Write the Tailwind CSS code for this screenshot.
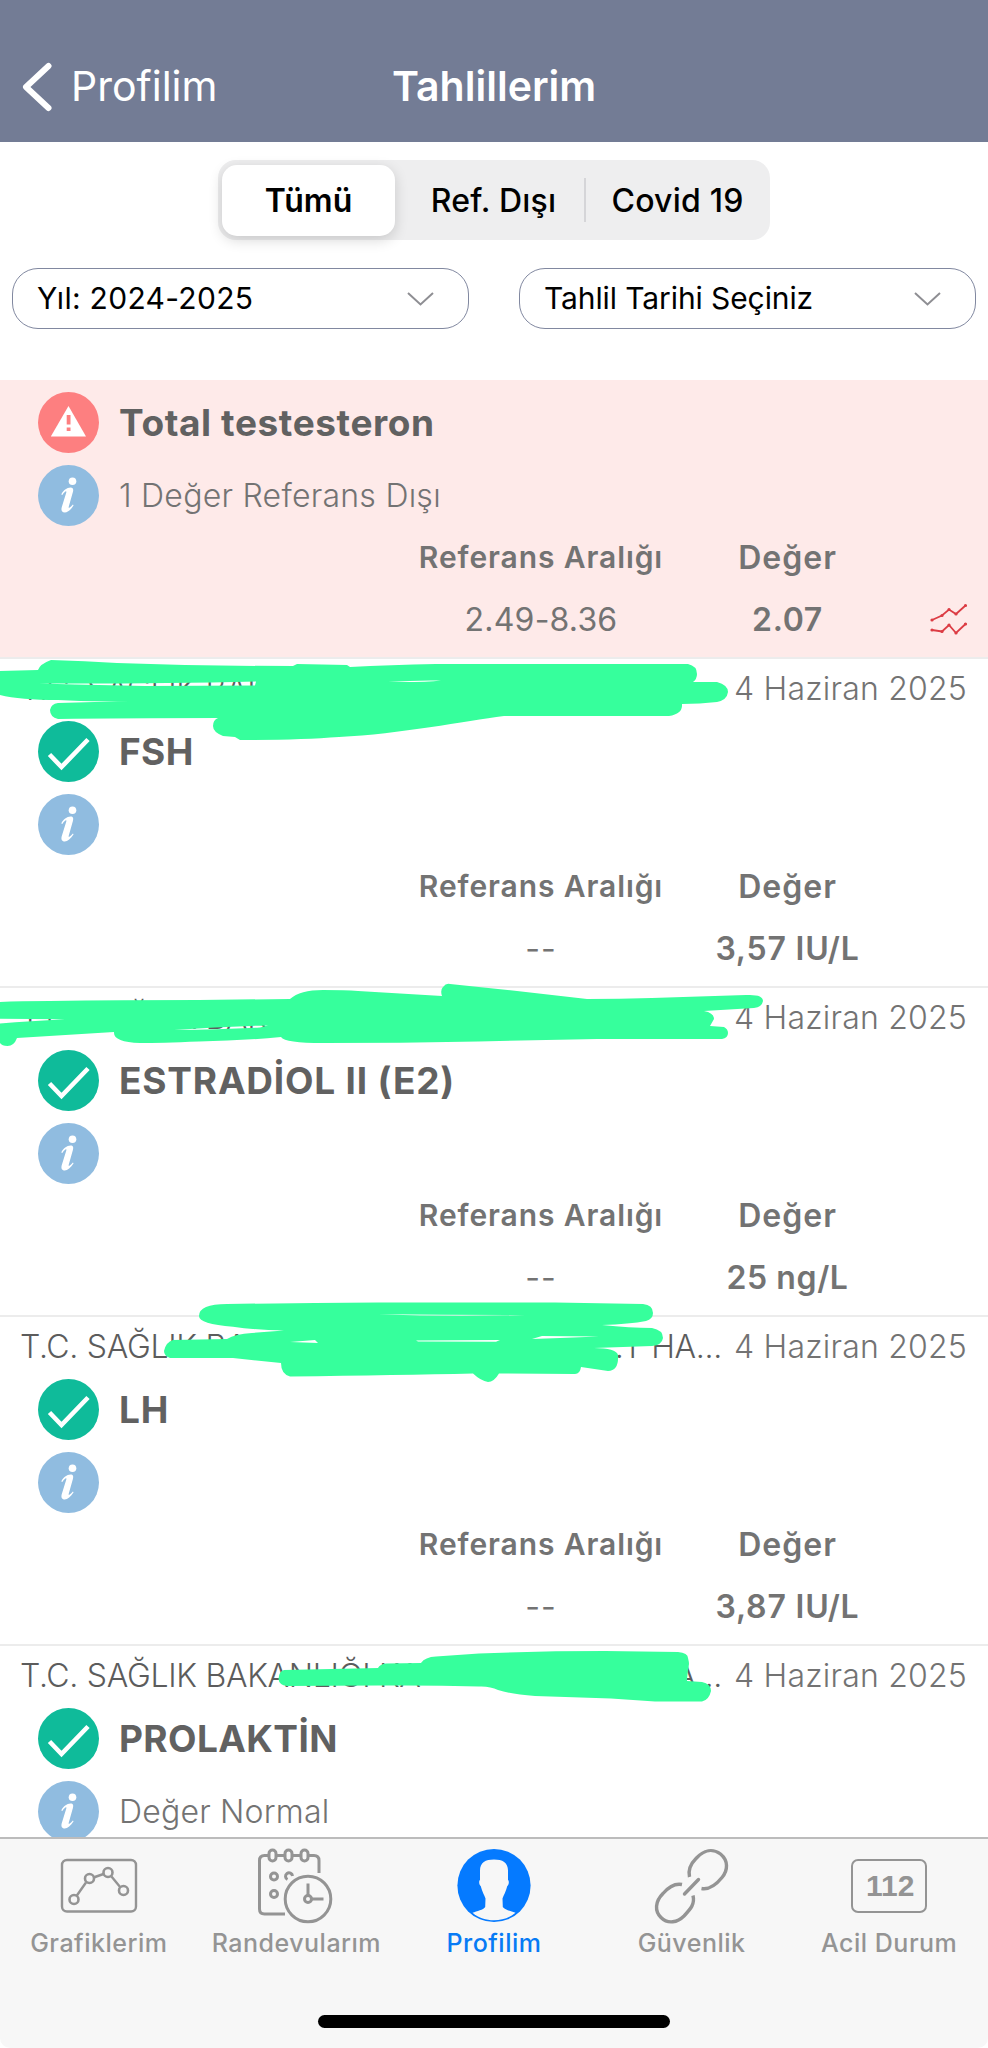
<!DOCTYPE html>
<html lang="tr">
<head>
  <meta charset="UTF-8">
  <title>Tahlillerim</title>
  <script src="https://cdn.jsdelivr.net/npm/@tailwindcss/browser@4"></script>
</head>
<body class="bg-white font-[Inter,'Liberation_Sans',sans-serif]">

  <!-- Shared icons -->
  <svg class="hidden">
    <symbol id="icon-check" viewBox="0 0 61 61">
      <circle cx="30.5" cy="30.5" r="30.5" fill="#0fbb9a"/>
      <path d="M11.5 33.5 L23.5 46 L50 18.5" fill="none" stroke="#fff" stroke-width="4.6"/>
    </symbol>
    <symbol id="icon-info" viewBox="0 0 61 61">
      <circle cx="30.5" cy="30.5" r="30.5" fill="#90bce0"/>
      <circle cx="34.5" cy="16.3" r="3.8" fill="#fff"/>
      <path d="M23.3 29.5 C25 25.5 29 22.5 32.5 22.5 C35.3 22.5 35.6 24.5 34.9 27 L30.8 41.5 C30.2 43.6 31.4 43.6 34.9 39.6 L35.6 40.3 C32.8 45 29.5 47.5 26.8 47.5 C23.6 47.5 22.9 45 23.8 42 L28.3 27.5 C28.8 25.5 27.2 25.6 24.3 30.1 Z" fill="#fff"/>
    </symbol>
  </svg>

  <div class="relative flex h-[2048px] w-[988px] flex-col overflow-hidden">

    <header class="grid h-[142px] shrink-0 grid-cols-[392px_204px_1fr] items-center bg-[#737c95] pt-[31px] text-[41px] leading-none text-white">
      <div class="flex items-center pl-[21px]">
        <svg class="h-[50px] w-[32px]" viewBox="0 0 32 50" fill="none" stroke="#fff" stroke-width="6" stroke-linecap="round" stroke-linejoin="round">
          <path d="M27.5 4 L5 25 L27.5 46"/>
        </svg>
        <span class="ml-[18px]">Profilim</span>
      </div>
      <h1 class="text-center font-semibold whitespace-nowrap">Tahlillerim</h1>
    </header>

    <section class="h-[238px] shrink-0 pt-[18px]">
      <div class="mx-auto flex h-[80px] w-[552px] items-center rounded-[18px] bg-[#eeeeef] p-[4px] text-[32px] font-medium text-black">
        <div class="flex h-[71px] w-[173px] items-center justify-center rounded-[15px] bg-white pt-px font-semibold shadow-[0_4px_14px_rgba(0,0,0,0.16)]">Tümü</div>
        <div class="flex h-[44px] w-[191px] items-center justify-center border-r-2 border-[#d5d5d8] pt-px pl-[8px] tracking-[0.2px]">Ref. Dışı</div>
        <div class="flex flex-1 items-center justify-center pt-px pl-[3px] tracking-[0.2px]">Covid 19</div>
      </div>
      <div class="mt-[28px] flex justify-between px-[12px] text-[30px] text-black">
        <div class="flex h-[61px] w-[457px] items-center justify-between rounded-[26px] border-[1.5px] border-[#8188a0] pr-[34px] pl-[24px]">
          <span class="tracking-[0.3px]">Yıl: 2024-2025</span>
          <svg class="h-[14px] w-[27px]" viewBox="0 0 27 14" fill="none" stroke="#8e8e93" stroke-width="2"><path d="M1 1 L13.5 12.5 L26 1"/></svg>
        </div>
        <div class="flex h-[61px] w-[457px] items-center justify-between rounded-[26px] border-[1.5px] border-[#8188a0] pr-[34px] pl-[24px]">
          <span class="tracking-[-0.1px]">Tahlil Tarihi Seçiniz</span>
          <svg class="h-[14px] w-[27px]" viewBox="0 0 27 14" fill="none" stroke="#8e8e93" stroke-width="2"><path d="M1 1 L13.5 12.5 L26 1"/></svg>
        </div>
      </div>
    </section>

    <main class="h-[1457px] shrink-0 overflow-hidden text-[32px] text-[#737373]">

      <!-- Out of range result -->
      <article class="h-[279px] border-b-2 border-[#ececec] bg-[#feeae9] pt-[12px]">
        <div class="flex h-[61px] items-center gap-[20px] pl-[38px]">
          <svg class="size-[61px]" viewBox="0 0 61 61">
            <circle cx="30.5" cy="30.5" r="30.5" fill="#fd7f80"/>
            <path d="M30.5 14 L48 44.5 H12.8 Z" fill="#fff"/>
            <path d="M28.7 23 h3.8 v9.5 h-3.8z M28.7 35.5 h3.8 v3.4 h-3.8z" fill="#fd7f80"/>
          </svg>
          <h2 class="text-[37px] font-bold tracking-[0.6px] text-[#616161]">Total testesteron</h2>
        </div>
        <div class="mt-[12px] flex h-[61px] items-center gap-[20px] pl-[38px]">
          <svg class="size-[61px]"><use href="#icon-info"/></svg>
          <p class="font-light tracking-[0.25px]">1 Değer Referans Dışı</p>
        </div>
        <div class="grid grid-cols-[248px_245px_77px] grid-rows-[63px_62px] place-items-center pl-[417px]">
          <span class="text-[30px] font-semibold tracking-[0.9px]">Referans Aralığı</span>
          <span class="font-semibold tracking-[1px]">Değer</span>
          <span></span>
          <span class="tracking-[0.2px]">2.49-8.36</span>
          <span class="font-semibold tracking-[0.7px]">2.07</span>
          <svg class="h-[34px] w-[40px]" viewBox="0 0 40 34" fill="none" stroke="#dc3c44" stroke-width="1.8">
            <path d="M3 17 L13 12.5 L20 6.5 L27 11 L36.5 2.5 M3 27 L13 28.5 L20 22 L27 30 L36.5 21"/>
            <path d="M3 17h.01M13 12.5h.01M20 6.5h.01M27 11h.01M36.5 2.5h.01M3 27h.01M13 28.5h.01M20 22h.01M27 30h.01M36.5 21h.01" stroke-width="3.2" stroke-linecap="round"/>
          </svg>
        </div>
      </article>

      <article class="h-[329px] border-b-2 border-[#ececec]">
        <div class="flex h-[59px] items-center justify-between pr-[21px] pl-[20px] font-light">
          <span class="tracking-[-0.3px] text-[#5c5c5c]">T.C. SAĞLIK BAKA</span>
          <span class="tracking-[0.2px]">4 Haziran 2025</span>
        </div>
        <div class="mt-[3px] flex h-[61px] items-center gap-[20px] pl-[38px]">
          <svg class="size-[61px]"><use href="#icon-check"/></svg>
          <h2 class="text-[37px] font-bold tracking-[0.4px] text-[#616161]">FSH</h2>
        </div>
        <div class="mt-[12px] flex h-[61px] items-center pl-[38px]">
          <svg class="size-[61px]"><use href="#icon-info"/></svg>
        </div>
        <div class="grid grid-cols-[248px_245px] grid-rows-[63px_62px] place-items-center pl-[417px]">
          <span class="text-[30px] font-semibold tracking-[0.9px]">Referans Aralığı</span>
          <span class="font-semibold tracking-[1px]">Değer</span>
          <span class="tracking-[1px]">--</span>
          <span class="font-semibold tracking-[0.8px]">3,57 IU/L</span>
        </div>
      </article>

      <article class="h-[329px] border-b-2 border-[#ececec]">
        <div class="flex h-[59px] items-center justify-between pr-[21px] pl-[20px] font-light">
          <span class="tracking-[-0.3px] text-[#5c5c5c]">T.C. SAĞLIK BAKA</span>
          <span class="tracking-[0.2px]">4 Haziran 2025</span>
        </div>
        <div class="mt-[3px] flex h-[61px] items-center gap-[20px] pl-[38px]">
          <svg class="size-[61px]"><use href="#icon-check"/></svg>
          <h2 class="text-[37px] font-bold tracking-[0.8px] text-[#616161]">ESTRADİOL II (E2)</h2>
        </div>
        <div class="mt-[12px] flex h-[61px] items-center pl-[38px]">
          <svg class="size-[61px]"><use href="#icon-info"/></svg>
        </div>
        <div class="grid grid-cols-[248px_245px] grid-rows-[63px_62px] place-items-center pl-[417px]">
          <span class="text-[30px] font-semibold tracking-[0.9px]">Referans Aralığı</span>
          <span class="font-semibold tracking-[1px]">Değer</span>
          <span class="tracking-[1px]">--</span>
          <span class="font-semibold tracking-[0.6px]">25 ng/L</span>
        </div>
      </article>

      <article class="h-[329px] border-b-2 border-[#ececec]">
        <div class="flex h-[59px] items-center pr-[21px] pl-[20px] font-light">
          <span class="tracking-[-0.3px] text-[#5c5c5c]">T.C. SAĞLIK BA</span>
          <span class="mr-[12px] ml-auto tracking-[-0.3px] text-[#5c5c5c]">.T HA...</span>
          <span class="tracking-[0.2px]">4 Haziran 2025</span>
        </div>
        <div class="mt-[3px] flex h-[61px] items-center gap-[20px] pl-[38px]">
          <svg class="size-[61px]"><use href="#icon-check"/></svg>
          <h2 class="text-[37px] font-bold tracking-[0.8px] text-[#616161]">LH</h2>
        </div>
        <div class="mt-[12px] flex h-[61px] items-center pl-[38px]">
          <svg class="size-[61px]"><use href="#icon-info"/></svg>
        </div>
        <div class="grid grid-cols-[248px_245px] grid-rows-[63px_62px] place-items-center pl-[417px]">
          <span class="text-[30px] font-semibold tracking-[0.9px]">Referans Aralığı</span>
          <span class="font-semibold tracking-[1px]">Değer</span>
          <span class="tracking-[1px]">--</span>
          <span class="font-semibold tracking-[0.8px]">3,87 IU/L</span>
        </div>
      </article>

      <article class="h-[329px]">
        <div class="flex h-[59px] items-center pr-[21px] pl-[20px] font-light">
          <span class="tracking-[-0.3px] text-[#5c5c5c]">T.C. SAĞLIK BAKANLIĞI KA</span>
          <span class="mr-[12px] ml-auto tracking-[-0.3px] text-[#5c5c5c]">A...</span>
          <span class="tracking-[0.2px]">4 Haziran 2025</span>
        </div>
        <div class="mt-[3px] flex h-[61px] items-center gap-[20px] pl-[38px]">
          <svg class="size-[61px]"><use href="#icon-check"/></svg>
          <h2 class="text-[37px] font-bold tracking-[0.4px] text-[#616161]">PROLAKTİN</h2>
        </div>
        <div class="mt-[12px] flex h-[61px] items-center gap-[20px] pl-[38px]">
          <svg class="size-[61px]"><use href="#icon-info"/></svg>
          <p class="pt-px font-light tracking-[0.2px]">Değer Normal</p>
        </div>
      </article>
    </main>

    <nav class="h-[211px] shrink-0 rounded-b-[10px] border-t-2 border-[#bcbcbc] bg-[#f7f7f7]">
      <div class="grid grid-cols-5 pt-[8px] text-[25px] leading-[32px] font-medium tracking-[0.5px] text-[#949494]">
        <div class="flex flex-col items-center gap-[2px]">
          <svg class="h-[78px] w-[80px]" viewBox="0 0 80 78" fill="none" stroke="#949494" stroke-width="2.4">
            <rect x="3" y="13" width="74" height="51.5" rx="5"/>
            <path d="M17.5 49 L27 35.5 M34.5 30.500 L44.500 27 M52.500 29.500 L61.500 40.500"/>
            <g stroke-width="2.600"><circle cx="15" cy="52.500" r="4.500"/><circle cx="30.500" cy="31.500" r="4.500"/><circle cx="49" cy="25.500" r="4.500"/><circle cx="64.500" cy="43.500" r="4.500"/></g>
          </svg>
          <span>Grafiklerim</span>
        </div>
        <div class="flex flex-col items-center gap-[2px]">
          <svg class="h-[78px] w-[78px]" viewBox="0 0 78 78" fill="none" stroke="#949494" stroke-width="3">
            <path d="M12 8.500 H7.500 Q2.500 8.500 2.500 13.500 V62 Q2.500 67 7.500 67 H28 M19 8.500 H27 M35 8.500 H43 M51 8.500 H57 Q62 8.500 62 13.500 V26"/>
            <rect x="12" y="3" width="7" height="11" rx="3.500"/>
            <rect x="28" y="3" width="7" height="11" rx="3.500"/>
            <rect x="44" y="3" width="7" height="11" rx="3.500"/>
            <circle cx="17" cy="29.500" r="3.500"/>
            <path d="M30.500 32.500 A3.500 3.500 0 1 1 35.500 29"/>
            <circle cx="17" cy="47" r="3.500"/>
            <circle cx="51" cy="52" r="22.800"/>
            <circle cx="51" cy="52" r="3.500"/>
            <path d="M51 48 V36.500 M55 52 H66.500"/>
          </svg>
          <span>Randevularım</span>
        </div>
        <div class="flex flex-col items-center gap-[2px] text-[#077bf5]">
          <svg class="h-[78px] w-[78px]" viewBox="0 0 78 78">
            <circle cx="39" cy="38.500" r="36.600" fill="#057aff"/>
            <path d="M39 12.500 C47.500 12.500 53 15.500 53 23.500 V33 C54.500 34 53.800 38 52.300 39 C51 44.500 48.500 48.500 47.500 51.500 L47.800 60 C50 63 56 64 60.500 65.800 C54 71.300 47 73.300 39 73.300 C31 73.300 24 71.300 17.500 65.800 C22 64 28.300 63 30.200 60 L30.500 51.500 C29.500 48.500 27 44.500 25.700 39 C24.200 38 23.500 34 25 33 V23.500 C25 15.500 30.500 12.500 39 12.500 Z" fill="#f7f7f7"/>
          </svg>
          <span>Profilim</span>
        </div>
        <div class="flex flex-col items-center gap-[2px]">
          <svg class="h-[78px] w-[78px]" viewBox="0 0 78 78" fill="none" stroke="#949494" stroke-width="3.400">
            <path d="M36.500 30 C35 23.500 37 17.500 43 11.500 C51 2.500 60 1.500 67.500 7 C75.500 13.500 75 23.500 69 30.500 C62.500 38.500 56.500 43 48.500 41.500"/>
            <path d="M29 37.500 C21.500 36 16 39.500 10 46.500 C2 54.500 1.500 64 8 70.500 C15 77.500 24.500 75.500 31 69 C38 61.500 42 57 40 48.500"/>
            <path d="M31.500 47 L45.500 32.500" stroke-linecap="round"/>
          </svg>
          <span>Güvenlik</span>
        </div>
        <div class="flex flex-col items-center gap-[2px]">
          <div class="flex h-[78px] items-center pb-px">
            <div class="flex h-[54px] w-[76px] items-center justify-center rounded-[7px] border-2 border-[#949494] pl-[2px] font-['Liberation_Sans'] text-[30px] font-bold tracking-normal">112</div>
          </div>
          <span>Acil Durum</span>
        </div>
      </div>
      <div class="mx-auto mt-[56px] h-[13px] w-[352px] rounded-full bg-black"></div>
    </nav>

    <!-- Marker strokes drawn over the hospital names -->
    <svg class="absolute inset-0 h-[2048px] w-[988px]" viewBox="0 0 988 2048" fill="#36ff9c" fill-rule="evenodd">
      <path d="M0 671 L38 670 Q40 664 51 660 Q85 661 117 663 Q200 666 293 666 L297 664 L347 665 L350 667 Q390 665 436 664 H688 Q697 666 697 674 Q697 679 693 682 L717 682 Q728 685 728 692 Q727 700 717 702 Q700 704 682 704 Q683 714 669 716 H504 C465 721 400 734 339 737 Q300 740 240 740 L235 737 L223 736 Q213 732 213 726 Q213 720 218 718 Q120 718 58 719 Q50 717 50 710 Q51 704 58 703 L131 701 Q90 702 58 700 Q20 700 0 695 Z M39 683.500 Q150 684 256 681.500 L255 685.500 L145 686 L75 684.500 Z M388 682 Q415 680 441 680.500 Q425 682.500 388 682 Z"/>
      <path d="M0 1002 Q20 1001 50 1001 Q120 1000 199 1000 L290 999 Q300 990 323 990 Q345 990 358 991 L442 996 Q440 990 443 987 Q446 983 450 984 L517 991 L587 999 Q620 999 652 998 L746 995 Q763 994 763 1001 Q762 1007 754 1008 L704 1011 Q714 1013 714 1019 L710 1026 L724 1027 Q728 1029 728 1033 Q728 1038 722 1039 H597 L478 1041.500 Q400 1043 323 1043 Q285 1043 281 1037 Q240 1041 199 1041.500 Q160 1043 140 1043 Q113 1042 114 1032 L17 1038 Q14 1046 7.500 1046 Q2 1046 0 1043 Z M0 1018.700 L65 1019.300 Q30 1021 0 1023.500 Z M174 1030 Q220 1026.500 268 1025.500 L260 1027.500 Q220 1029.500 174 1030 Z"/>
      <path d="M199 1316 Q199 1304 227 1304 Q300 1303 378 1302.500 H555 L643 1304 Q653 1305 653 1313 Q653 1319 646 1321 Q630 1324 602 1325 Q630 1328 652 1328 Q663 1330 663 1338 Q662 1345 652 1346 L594 1348 Q616 1348 618 1355 Q619 1371 608 1371 L581 1367 Q580 1374 575 1374 L499 1373.500 Q494 1382 488 1382 Q481 1381 473 1373.500 Q400 1375 290 1376.500 Q281 1374 281 1363 L233 1358 H170 Q164 1356 164 1351 Q166 1342 173 1340 L227 1339 Q235 1334 252 1333 L284 1330.500 Q255 1330 233 1326.700 Q199 1324 199 1316 Z M378 1314.300 Q450 1315 525 1315 Q450 1317 378 1314.300 Z M290 1342 L315 1340 L318 1343 Z M416 1340.500 L500 1340 L496 1341.800 L418 1341.500 Z M532 1339 L542 1336 L599 1336.500 L560 1338 Z"/>
      <path d="M278.500 1679 Q279 1671 284 1670 L378 1668 Q380 1664 386 1663.500 L421 1663 Q425 1657 436 1656.500 L479 1653.500 Q540 1651 605 1651 L678 1652 Q688 1653 688 1658 Q689 1662 689 1664 Q687 1676 687 1681 L702 1682 Q711 1684 711 1691 Q709 1700 702 1701.500 H655 L611 1698.500 L535 1696 Q510 1694 498 1690 Q490 1686 479 1686.500 Q430 1685 378 1685.500 L287 1686 Q279 1685 278.500 1679 Z"/>
    </svg>
  </div>
</body>
</html>
